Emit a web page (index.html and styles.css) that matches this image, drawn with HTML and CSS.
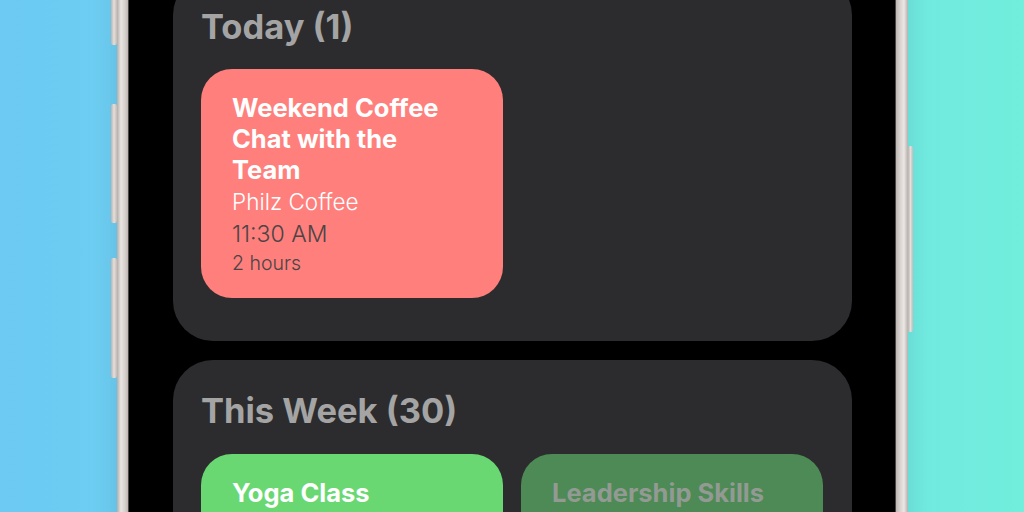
FILE: index.html
```html
<!DOCTYPE html>
<html lang="en">
<head>
<meta charset="utf-8">
<title>Events</title>
<link rel="stylesheet" href="styles.css">
</head>
<body>
<div class="stage">
  <div class="phone">
    <span class="btn btn-l1"></span>
    <span class="btn btn-l2"></span>
    <span class="btn btn-l3"></span>
    <span class="btn btn-r1"></span>
    <div class="screen">
      <section class="panel panel-first">
        <h2 class="panel-title">Today (1)</h2>
        <div class="cards">
          <div class="card card-red">
            <div class="card-title">Weekend Coffee Chat with the Team</div>
            <div class="card-place">Philz Coffee</div>
            <div class="card-time">11:30 AM</div>
            <div class="card-dur">2 hours</div>
          </div>
        </div>
      </section>
      <section class="panel">
        <h2 class="panel-title">This Week (30)</h2>
        <div class="cards">
          <div class="card card-green">
            <div class="card-title">Yoga Class</div>
          </div>
          <div class="card card-dim">
            <div class="card-title">Leadership Skills</div>
          </div>
        </div>
      </section>
    </div>
  </div>
</div>
</body>
</html>
```
FILE: styles.css
```css
* { box-sizing: border-box; }
html, body {
  margin: 0;
  padding: 0;
  width: 1024px;
  height: 512px;
  overflow: hidden;
}
body {
  background: linear-gradient(to right, #6ccaf3 0%, #70dbe9 55%, #71eedc 100%);
  font-family: Inter, "Liberation Sans", sans-serif;
}
.stage {
  display: flex;
  width: 1024px;
  height: 512px;
}
.phone {
  position: relative;
  margin-left: 117px;
  margin-top: -60px;
  width: 791px;
  height: 700px;
  padding: 0 12px 0 11px;
  background: linear-gradient(to right, #b4aca9 0px, #e9e5e2 4px, #d6d0cc 8px, #bdb6b2 11px, #bdb6b2 calc(100% - 12px), #d8d2ce calc(100% - 8px), #ebe7e4 calc(100% - 4px), #b7b0ac 100%);
  box-shadow: 0 0 24px rgba(0, 40, 80, 0.12);
}
.btn {
  position: absolute;
  width: 6px;
  background: linear-gradient(to right, #b9b2ae, #e4dfdc 50%, #c2bbb7);
  border-radius: 2px;
}
.btn-l1 { left: -6px; top: 0; height: 105px; }
.btn-l2 { left: -6px; top: 164px; height: 119px; }
.btn-l3 { left: -6px; top: 318px; height: 120px; }
.btn-r1 { right: -5px; width: 5px; top: 206px; height: 186px; }
.screen {
  height: 100%;
  background: #000;
  border-left: 1px solid #4a4846;
  border-right: 1px solid #4a4846;
  padding: 35px 43px 0 44px;
  display: flex;
  flex-direction: column;
  gap: 19px;
}
.panel {
  background: #2c2c2e;
  border-radius: 40px;
  padding: 30px 28px 43px;
}
.panel-first { padding-top: 31px; }
.panel-first .panel-title { margin-bottom: 21px; }
.panel-title {
  margin: 0 0 22px;
  font-size: 34.5px;
  line-height: 42px;
  font-weight: 700;
  color: #a4a4a4;
}
.cards {
  display: flex;
  gap: 18px;
}
.card {
  width: 302px;
  height: 229px;
  border-radius: 31px;
  padding: 23px 50px 0 31px;
  flex: none;
}
.card-red { background: #fe7f7c; }
.card-green { background: #69d873; }
.card-dim { background: #4d8a55; padding-right: 20px; }
.card-title {
  font-size: 25.5px;
  line-height: 31px;
  font-weight: 700;
  color: #ffffff;
}
.card-dim .card-title { color: #939a93; }
.card-place {
  margin-top: 1px;
  font-size: 22.5px;
  line-height: 31px;
  font-weight: 300;
  color: #ffffff;
}
.card-time {
  margin-top: 2px;
  font-size: 23px;
  line-height: 31px;
  font-weight: 300;
  color: #4b4545;
}
.card-dur {
  margin-top: -1px;
  font-size: 19.5px;
  line-height: 29px;
  font-weight: 300;
  color: #4b4545;
}
```
